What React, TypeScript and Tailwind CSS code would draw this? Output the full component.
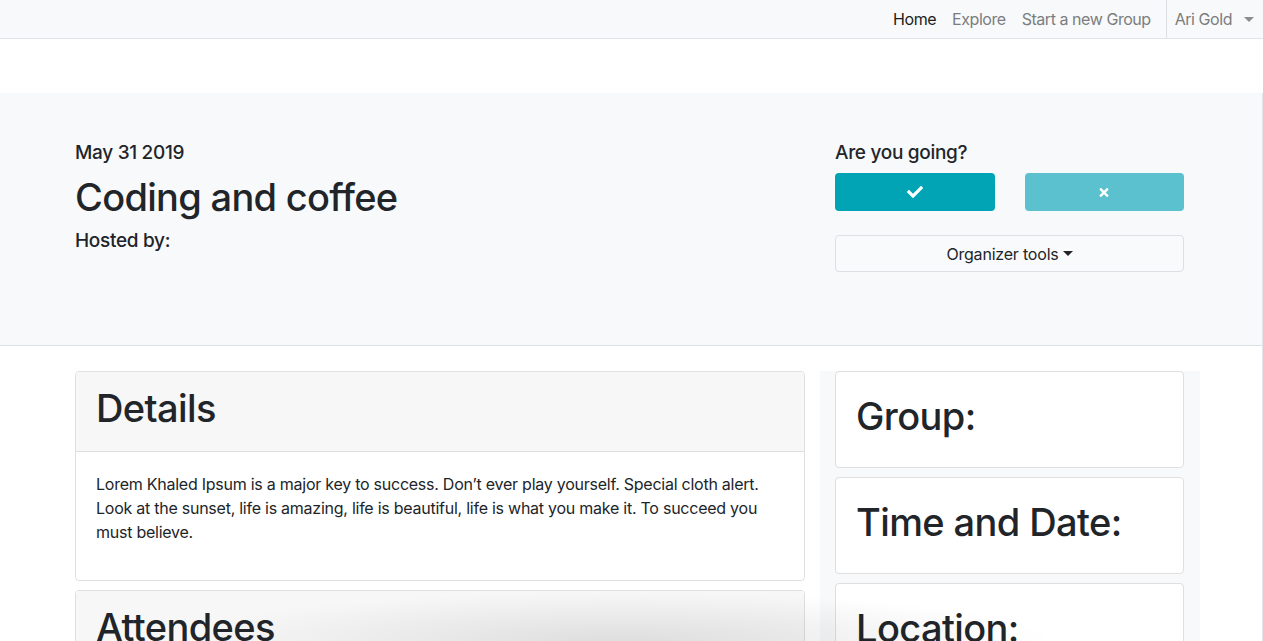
import { FaCheck, FaTimes } from 'react-icons/fa'

const font = "font-['Inter','Noto_Sans','Liberation_Sans',sans-serif]"

function Caret({ className = '' }: { className?: string }) {
  return (
    <span
      className={`inline-block w-0 h-0 border-x-[5px] border-x-transparent border-t-[5px] ${className}`}
    />
  )
}

function Navbar() {
  return (
    <nav className="h-[39px] bg-[#f8f9fa] border-b border-[#e1e4e8] flex justify-end text-[16px] tracking-[-0.45px]">
      <ul className="flex items-center">
        <li className="px-2 text-[#1c1e20]">Home</li>
        <li className="px-2 text-[#7b7d80]">Explore</li>
        <li className="px-2 text-[#7b7d80]">Start a new Group</li>
      </ul>
      <div className="flex items-center border-l border-[#dcdfe2] ml-[7px] pl-2 pr-[9px] text-[#7b7d80]">
        <span>Ari Gold</span>
        <Caret className="ml-3 border-t-[#8a8c8e]" />
      </div>
    </nav>
  )
}

function Header() {
  return (
    <section className="mt-[54px] h-[253px] bg-[#f8f9fa] border-b border-[#dee2e6]">
      <div className="ml-[60px] w-[1140px] flex pt-[48px]">
        <div className="w-[760px] px-[15px]">
          <h5 className="text-[19px] leading-[24px] font-medium mb-2 tracking-[-0.3px]">May 31 2019</h5>
          <h1 className="text-[38px] leading-[48px] font-medium mb-2 tracking-[-0.7px]">Coding and coffee</h1>
          <h5 className="text-[19px] leading-[24px] font-medium tracking-[-0.3px]">Hosted by:</h5>
        </div>
        <div className="w-[380px] px-[15px]">
          <h5 className="text-[19px] leading-[24px] font-medium mb-2 tracking-[-0.3px]">Are you going?</h5>
          <div className="flex gap-[30px] pr-px">
            <button className="flex-1 h-[38px] rounded-[4px] bg-[#00a4b5] text-white flex items-center justify-center">
              <FaCheck className="w-[16px] h-[16px]" />
            </button>
            <button className="flex-1 h-[38px] rounded-[4px] bg-[#5bc1ce] text-white flex items-center justify-center">
              <FaTimes className="w-[12px] h-[13px]" />
            </button>
          </div>
          <button className="mt-6 w-[349px] h-[37px] rounded-[4px] border border-[#dcdfe3] bg-[#f9fafb] text-[16px] tracking-[-0.2px] text-[#212529] flex items-center justify-center gap-1">
            Organizer tools
            <Caret className="border-t-[#212529]" />
          </button>
        </div>
      </div>
    </section>
  )
}

function Card({ children }: { children: React.ReactNode }) {
  return (
    <div className="bg-white border border-[#dfdfdf] rounded-[4px] mb-[9px] overflow-hidden">
      {children}
    </div>
  )
}

const h1 = 'text-[38px] leading-[48px] font-medium mb-[7px] tracking-[-0.6px]'

export default function App() {
  return (
    <div className={`relative h-[641px] overflow-hidden bg-white text-[#212529] ${font}`}>
      <Navbar />
      <div className="w-[1263px] border-r border-[#e1e4e8] h-[602px]">
        <Header />
        <div className="ml-[60px] w-[1140px] flex mt-[25px]">
          <div className="w-[760px] px-[15px]">
            <Card>
              <div className="bg-[#f7f7f7] border-b border-[#dfdfdf] px-5 pt-3 pb-3">
                <h1 className={h1}>Details</h1>
              </div>
              <div className="p-5 text-[16px] leading-[24px] tracking-[-0.25px]">
                <p className="mb-4">
                  Lorem Khaled Ipsum is a major key to success. Don’t ever play yourself. Special cloth alert.
                  Look at the sunset, life is amazing, life is beautiful, life is what you make it. To succeed you
                  must believe.
                </p>
              </div>
            </Card>
            <Card>
              <div className="bg-[#f7f7f7] border-b border-[#dfdfdf] px-5 pt-3 pb-3">
                <h1 className={h1}>Attendees</h1>
              </div>
              <div className="p-5 text-[16px] leading-[24px]">
                <p>Ari Gold</p>
              </div>
            </Card>
          </div>
          <div className="w-[380px] pl-[15px] pr-[16px] bg-[#f8f9fa] h-[300px]">
            <Card>
              <div className="p-5">
                <h1 className={h1}>Group:</h1>
              </div>
            </Card>
            <Card>
              <div className="p-5">
                <h1 className={h1}>Time and Date:</h1>
              </div>
            </Card>
            <Card>
              <div className="p-5">
                <h1 className={h1}>Location:</h1>
              </div>
            </Card>
          </div>
        </div>
      </div>
      <div className="pointer-events-none absolute bottom-0 left-[180px] w-[880px] h-[50px] bg-[radial-gradient(ellipse_at_bottom,rgba(0,0,0,0.1),rgba(0,0,0,0)_70%)]" />
    </div>
  )
}
